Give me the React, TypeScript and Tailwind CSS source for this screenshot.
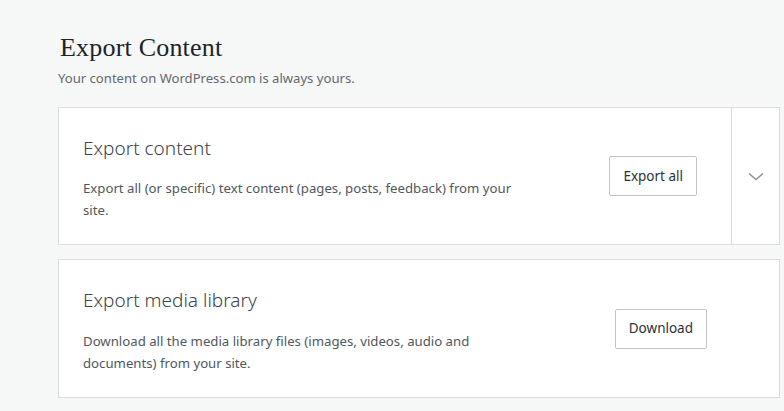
import React from "react";

const ChevronDown: React.FC = () => (
  <svg width="24" height="24" viewBox="0 0 24 24" fill="none" stroke="#8c8f94" strokeWidth="1.5">
    <path d="M5 9.5l7 6 7-6" />
  </svg>
);

const App: React.FC = () => {
  return (
    <div className="min-h-[411px] w-full bg-[#f6f7f7] pl-[58px] pr-[4px] pt-[32px] font-['Noto_Sans',sans-serif]">
      <h1 className="text-[26px] leading-[32px] text-[#1d2327] font-['Liberation_Serif',serif] pl-[2px] tracking-[0.2px]">
        Export Content
      </h1>
      <p className="mt-[4px] text-[13.1px] leading-[20px] text-[#646970]">
        Your content on WordPress.com is always yours.
      </p>

      <div className="mt-[19px] flex border border-[#dcdcde] bg-white h-[138px]">
        <div className="flex flex-1 items-center justify-between pl-[24px] pr-[34px]">
          <div className="self-start pt-[26px]">
            <h2 className="text-[19px] leading-[28px] font-light text-[#3c434a]">Export content</h2>
            <p className="mt-[15px] max-w-[450px] text-[13.2px] leading-[22px] text-[#50575e]">
              Export all (or specific) text content (pages, posts, feedback) from your site.
            </p>
          </div>
          <button className="h-[40px] rounded-[2px] border border-[#c3c4c7] bg-white px-[13px] text-[13.5px] text-[#2c3338]">
            Export all
          </button>
        </div>
        <div className="flex w-[48px] items-center justify-center border-l border-[#dcdcde]">
          <ChevronDown />
        </div>
      </div>

      <div className="mt-[14px] flex h-[139px] items-center justify-between border border-[#dcdcde] bg-white pl-[24px] pr-[72px]">
        <div className="self-start pt-[26px]">
          <h2 className="text-[19px] leading-[28px] font-light text-[#3c434a]">Export media library</h2>
          <p className="mt-[16px] max-w-[400px] text-[13.2px] leading-[22px] text-[#50575e]">
            Download all the media library files (images, videos, audio and documents) from your site.
          </p>
        </div>
        <button className="h-[40px] rounded-[2px] border border-[#c3c4c7] bg-white px-[13px] text-[13.5px] text-[#2c3338]">
          Download
        </button>
      </div>
    </div>
  );
};

export default App;
